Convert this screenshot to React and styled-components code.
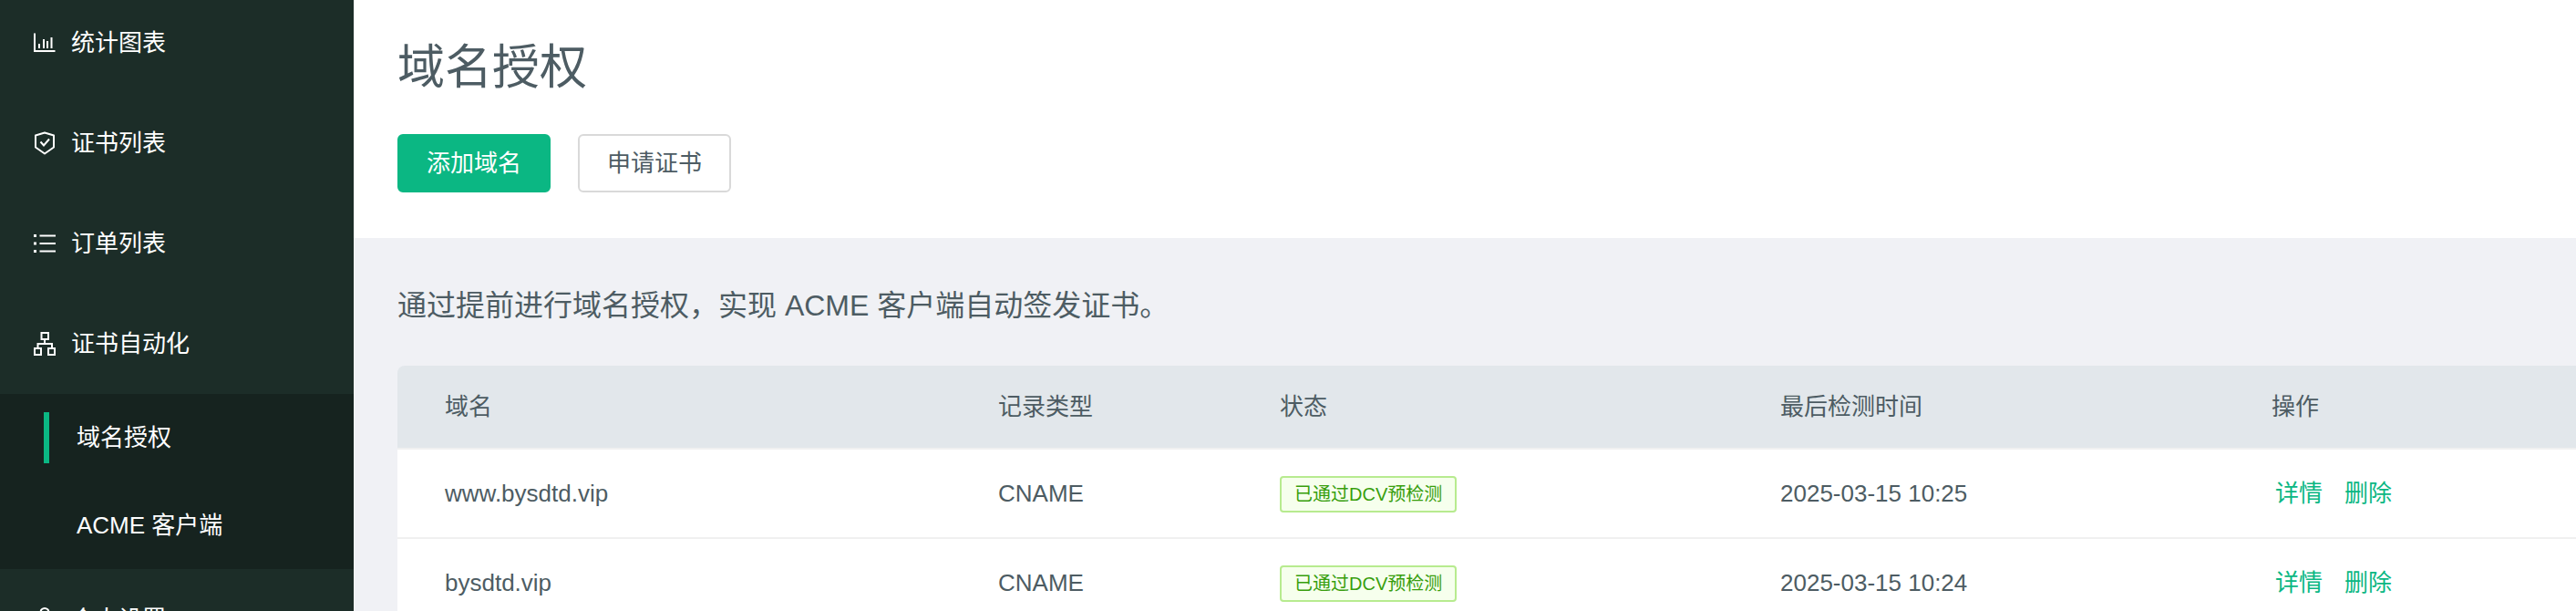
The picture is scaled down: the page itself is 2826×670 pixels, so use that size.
import React from "react";
import styled, { createGlobalStyle } from "styled-components";

const GlobalStyle = createGlobalStyle`
  * { box-sizing: border-box; }
  body {
    margin: 0;
    background: #f0f1f5;
    color: #4d5c63;
    font-family: "Liberation Sans", "Noto Sans CJK SC", sans-serif;
    font-size: 26px;
    font-weight: 400;
  }
  a { text-decoration: none; }
`;

const Page = styled.div`
  display: flex;
  height: 100vh;
  overflow: hidden;
`;

const Sidebar = styled.nav`
  flex: 0 0 388px;
  overflow: hidden;
  background: #1c2d28;
`;

const Menu = styled.ul`
  margin: -8px 0 0;
  padding: 0;
  list-style: none;
`;

const MenuLink = styled.a`
  display: flex;
  align-items: center;
  gap: 16px;
  height: 110px;
  padding: 0 36px;
  color: #fff;
  line-height: 40px;

  svg { flex: none; }
`;

const SubMenu = styled.ul`
  margin: 0;
  padding: 0;
  list-style: none;
  background: #16231f;
`;

const SubLink = styled.a`
  display: flex;
  align-items: center;
  gap: 30px;
  height: 96px;
  padding-left: 48px;
  color: #fff;
  line-height: 40px;

  &::before {
    content: "";
    width: 6px;
    height: 56px;
    background: ${(p) => (p.$active ? "#0bb783" : "transparent")};
  }
`;

const Main = styled.main`
  flex: 1;
  min-width: 0;
  overflow: hidden;
`;

const Header = styled.header`
  padding: 36px 48px 50px;
  background: #fff;
`;

const Title = styled.h1`
  margin: 0 0 35px;
  font-size: 52px;
  font-weight: 400;
  line-height: 76px;
`;

const Actions = styled.div`
  display: flex;
  gap: 30px;
`;

const Button = styled.button`
  height: 64px;
  padding: 0 30px;
  border: 2px solid ${(p) => (p.$primary ? "#0bb783" : "#d9d9d9")};
  border-radius: 6px;
  background: ${(p) => (p.$primary ? "#0bb783" : "#fff")};
  color: ${(p) => (p.$primary ? "#fff" : "inherit")};
  font: inherit;
  line-height: 40px;
`;

const Content = styled.section`
  padding: 48px 0 0 48px;
`;

const Intro = styled.p`
  margin: 0 0 40px;
  font-size: 32px;
  line-height: 52px;
`;

const Table = styled.table`
  width: 100%;
  border-collapse: separate;
  border-spacing: 0;
  table-layout: fixed;
`;

const HeadCell = styled.th`
  width: ${(p) => p.$width};
  height: 92px;
  padding: 0 0 0 52px;
  border-bottom: 2px solid #f0f0f0;
  background: #e2e7eb;
  font-weight: 400;
  text-align: left;
  line-height: 40px;

  &:first-child { border-top-left-radius: 8px; }
`;

const Cell = styled.td`
  height: 98px;
  padding: 0 0 0 52px;
  border-bottom: 2px solid #f0f0f0;
  background: #fff;
  line-height: 40px;
`;

const Tag = styled.span`
  display: inline-block;
  padding: 0 14px;
  border: 2px solid #b7eb8f;
  border-radius: 4px;
  background: #f6ffed;
  color: #389e0d;
  font-size: 20px;
  line-height: 36px;
  white-space: nowrap;
`;

const RowActions = styled.div`
  display: flex;
  gap: 24px;
  padding-left: 4px;
`;

const RowLink = styled.a`
  color: #0bb783;
`;

const Icon = ({ children }) => (
  <svg width="26" height="26" viewBox="0 0 26 26" fill="none" stroke="#fff" strokeWidth="2" aria-hidden="true">
    {children}
  </svg>
);

const ChartIcon = () => (
  <Icon>
    <path d="M2 2.5V22H24.5" />
    <path d="M7 14v5M12 9v10M16 11v8M20.5 7v12" />
  </Icon>
);

const ShieldIcon = () => (
  <Icon>
    <path d="M13 1.500L23 4.500V17.500L13 24.500L3 17.500V4.500Z" strokeLinejoin="round" />
    <path d="M8.500 11.500L12 15.500L18 8.500" />
  </Icon>
);

const ListIcon = () => (
  <Icon>
    <path d="M7.500 4.500H25M7.500 13H25M7.500 21.500H25" />
    <path d="M1 4.500H4M1 13H4M1 21.500H4" strokeWidth="3" />
  </Icon>
);

const ClusterIcon = () => (
  <Icon>
    <path d="M9.500 1H17V8H9.500ZM2 18H9V25H2ZM17 18H24V25H17ZM13 8V13M5.500 18V13H21V18" />
  </Icon>
);

const UserIcon = () => (
  <Icon>
    <circle cx="13" cy="5.500" r="4.500" />
    <path d="M3 25C3 11 23 11 23 25" />
  </Icon>
);

const columns = [
  { label: "域名", width: "607px" },
  { label: "记录类型", width: "309px" },
  { label: "状态", width: "549px" },
  { label: "最后检测时间", width: "539px" },
  { label: "操作" },
];

const records = [
  { domain: "www.bysdtd.vip", type: "CNAME", checked: "2025-03-15 10:25" },
  { domain: "bysdtd.vip", type: "CNAME", checked: "2025-03-15 10:24" },
];

export default function App() {
  return (
    <Page>
      <GlobalStyle />
      <Sidebar>
        <Menu>
          <li><MenuLink href="#charts"><ChartIcon />统计图表</MenuLink></li>
          <li><MenuLink href="#certs"><ShieldIcon />证书列表</MenuLink></li>
          <li><MenuLink href="#orders"><ListIcon />订单列表</MenuLink></li>
          <li>
            <MenuLink href="#automation"><ClusterIcon />证书自动化</MenuLink>
            <SubMenu>
              <li><SubLink href="#domains" $active aria-current="page">域名授权</SubLink></li>
              <li><SubLink href="#acme">ACME 客户端</SubLink></li>
            </SubMenu>
          </li>
          <li><MenuLink href="#settings"><UserIcon />个人设置</MenuLink></li>
        </Menu>
      </Sidebar>
      <Main>
        <Header>
          <Title>域名授权</Title>
          <Actions>
            <Button type="button" $primary>添加域名</Button>
            <Button type="button">申请证书</Button>
          </Actions>
        </Header>
        <Content>
          <Intro>通过提前进行域名授权，实现 ACME 客户端自动签发证书。</Intro>
          <Table>
            <thead>
              <tr>
                {columns.map((c) => (
                  <HeadCell key={c.label} $width={c.width} scope="col">{c.label}</HeadCell>
                ))}
              </tr>
            </thead>
            <tbody>
              {records.map((r) => (
                <tr key={r.domain}>
                  <Cell>{r.domain}</Cell>
                  <Cell>{r.type}</Cell>
                  <Cell><Tag>已通过DCV预检测</Tag></Cell>
                  <Cell>{r.checked}</Cell>
                  <Cell>
                    <RowActions>
                      <RowLink href="#detail">详情</RowLink>
                      <RowLink href="#delete">删除</RowLink>
                    </RowActions>
                  </Cell>
                </tr>
              ))}
            </tbody>
          </Table>
        </Content>
      </Main>
    </Page>
  );
}
